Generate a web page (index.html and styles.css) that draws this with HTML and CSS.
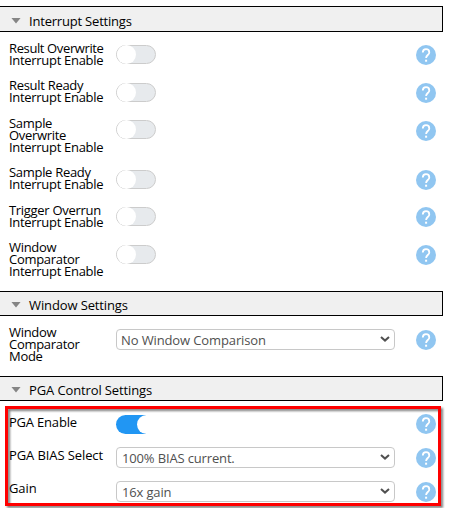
FILE: index.html
```html
<!DOCTYPE html>
<html lang="en">
<head>
<meta charset="utf-8">
<title>Settings</title>
<link rel="stylesheet" href="styles.css">
</head>
<body>
<svg class="defs" aria-hidden="true">
  <symbol id="help" viewBox="0 0 20 20">
    <circle cx="10" cy="10" r="10" fill="#90c6f1"/>
    <path d="M6.8 7.6C6.8 5.6 8.1 4.2 10 4.2s3.3 1.3 3.3 3.2c0 2.4-3.2 2.9-3.2 5.5" fill="none" stroke="#fff" stroke-width="1.8"/>
    <rect x="9.1" y="14.7" width="2" height="2" fill="#fff"/>
  </symbol>
  <symbol id="chevron" viewBox="0 0 10 6">
    <path d="M1 1l4 3.6L9 1" fill="none" stroke="#505050" stroke-width="2"/>
  </symbol>
</svg>
<main class="panel">
  <section class="group interrupts">
    <h2 class="header"><i class="arrow"></i><span>Interrupt Settings</span></h2>
    <div class="rows">
      <div class="row"><div class="label"><span class="snug">Result Overwrite</span><br>Interrupt Enable</div><div class="toggle"></div><svg class="help"><use href="#help"/></svg></div>
      <div class="row"><div class="label">Result Ready<br>Interrupt Enable</div><div class="toggle"></div><svg class="help"><use href="#help"/></svg></div>
      <div class="row tall"><div class="label">Sample<br>Overwrite<br>Interrupt Enable</div><div class="toggle"></div><svg class="help"><use href="#help"/></svg></div>
      <div class="row"><div class="label">Sample Ready<br>Interrupt Enable</div><div class="toggle"></div><svg class="help"><use href="#help"/></svg></div>
      <div class="row"><div class="label">Trigger Overrun<br>Interrupt Enable</div><div class="toggle"></div><svg class="help"><use href="#help"/></svg></div>
      <div class="row"><div class="label">Window<br>Comparator<br>Interrupt Enable</div><div class="toggle"></div><svg class="help"><use href="#help"/></svg></div>
    </div>
  </section>
  <section class="group window">
    <h2 class="header"><i class="arrow"></i><span>Window Settings</span></h2>
    <div class="rows">
      <div class="row"><div class="label">Window<br>Comparator<br>Mode</div><div class="select"><span class="snug">No Window Comparison</span><svg class="chevron"><use href="#chevron"/></svg></div><svg class="help"><use href="#help"/></svg></div>
    </div>
  </section>
  <section class="group pga">
    <h2 class="header"><i class="arrow"></i><span>PGA Control Settings</span></h2>
    <div class="rows">
      <div class="row"><div class="label">PGA Enable</div><div class="toggle on"></div><svg class="help"><use href="#help"/></svg></div>
      <div class="row"><div class="label">PGA BIAS Select</div><div class="select"><span>100% BIAS current.</span><svg class="chevron"><use href="#chevron"/></svg></div><svg class="help"><use href="#help"/></svg></div>
      <div class="row"><div class="label">Gain</div><div class="select"><span>16x gain</span><svg class="chevron"><use href="#chevron"/></svg></div><svg class="help"><use href="#help"/></svg></div>
      <div class="highlight"></div>
    </div>
  </section>
</main>
</body>
</html>
```
FILE: styles.css
```css
* { box-sizing: border-box; }
body { margin: 0; background: #fff; color: #000; font: 13px/12px "Open Sans", "Noto Sans", sans-serif; overflow: hidden; }
.defs { position: absolute; width: 0; height: 0; }
.panel { width: 443px; height: 508px; padding-top: 6px; }
.interrupts { height: 285px; }
.window { height: 85px; }
.header { display: flex; align-items: center; height: 25px; margin: 0; padding: 3px 0 0 11px; background: #f0f0f0; border: 1px solid #000; border-left: 0; font-size: 13px; font-weight: 400; letter-spacing: -.12px; }
.interrupts .header { height: 26px; padding-top: 4px; letter-spacing: -.2px; }
.arrow { width: 10px; height: 6px; margin: -1px 8px 0 0; background: #858585; clip-path: polygon(0 0, 100% 0, 50% 100%); }
.rows { padding: 10px 0 0 9px; }
.row { display: grid; grid-template-columns: 107px 279px 20px; height: 37.5px; align-items: start; }
.row.tall { height: 49.5px; }
.label { margin-top: -.5px; white-space: nowrap; letter-spacing: -.3px; }
.label .snug { letter-spacing: -.38px; }
.toggle { display: flex; width: 40px; height: 19px; margin-top: 3px; border: 1px solid #ccc; border-radius: 10px; background: linear-gradient(90deg, #fff 9px, #e7eaed 9px); }
.toggle::before { content: ""; width: 19px; height: 19px; margin-top: -1px; border-radius: 50%; background: #fff; }
.toggle.on { border: 0; background: linear-gradient(90deg, #2196f3 30px, #fff 30px); }
.toggle.on::before { margin: 0 0 0 21px; }
.help { width: 20px; height: 20px; margin: 3px 0 0 21px; }
.tall .help { margin-top: 4px; }
.select { display: flex; align-items: center; justify-content: space-between; width: 279px; height: 21px; padding: 1px 4px 0 5px; border: 1px solid #c8c8c8; border-radius: 4px; color: #505050; }
.select .snug { letter-spacing: -.12px; }
.chevron { width: 10px; height: 6px; margin-top: -2px; }
.window .label { margin-top: 0; }
.window .select { margin-top: 3px; padding-left: 4px; }
.window .help { margin-top: 4px; }
.pga .rows { position: relative; padding-top: 14px; }
.pga .row { height: 34px; }
.pga .toggle { margin-top: 0; }
.pga .select { margin-top: -2px; letter-spacing: -.15px; }
.pga .help { margin-top: -1px; }
.pga .label { margin-top: 1px; letter-spacing: -.2px; }
.pga .row + .row .label { margin-top: 0; letter-spacing: -.1px; }
.pga .row + .row + .row .label { margin-top: -1px; }
.highlight { position: absolute; left: 5px; top: 5px; width: 436px; height: 100px; border: 3px solid #f00; filter: drop-shadow(2px 2px 1px #00000080); }
```
